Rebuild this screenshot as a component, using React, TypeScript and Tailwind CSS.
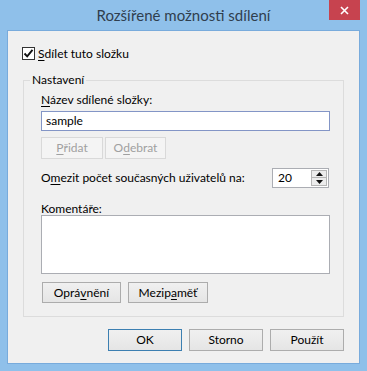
import clsx from "clsx";

type WinButtonProps = {
  children: React.ReactNode;
  className?: string;
  isDefault?: boolean;
  disabled?: boolean;
};

// Classic Win8 push button
function WinButton({ children, className, isDefault, disabled }: WinButtonProps) {
  return (
    <button
      type="button"
      disabled={disabled}
      className={clsx(
        "flex items-center justify-center border leading-none",
        disabled
          ? "border-[#d9d9d9] bg-[#f4f4f4] text-[#a0a0a0]"
          : "bg-linear-to-b from-[#f0f0f0] to-[#e5e5e5] text-black",
        !disabled && (isDefault ? "border-[#3c7fb1]" : "border-[#acacac]"),
        className
      )}>
      {children}
    </button>
  );
}

// Underlined access key letter
function Key({ children }: { children: React.ReactNode }) {
  return <span className="underline underline-offset-2 decoration-1">{children}</span>;
}

function Spinner() {
  return (
    <div className="w-[57px] h-[20px] border border-[#abadb3] bg-white flex">
      <span className="flex-1 pl-[5px] flex items-center">20</span>
      <div className="w-[16px] flex flex-col my-[1px] mr-[1px]">
        <span className="h-[9px] bg-[#ececec] border border-[#b5b5b5] flex items-center justify-center">
          <svg width="7" height="4" viewBox="0 0 7 4">
            <path d="M3.5 0 L7 4 L0 4 Z" fill="#111" />
          </svg>
        </span>
        <span className="h-[9px] bg-[#ececec] border border-t-0 border-[#b5b5b5] flex items-center justify-center">
          <svg width="7" height="4" viewBox="0 0 7 4">
            <path d="M0 0 L7 0 L3.5 4 Z" fill="#111" />
          </svg>
        </span>
      </div>
    </div>
  );
}

export default function App() {
  return (
    <div className="w-[367px] h-[371px] bg-[#8fc0ea] flex flex-col font-['Lato',sans-serif] text-[12px] text-black select-none">
      {/* Title bar */}
      <div className="relative h-[31px] flex items-center justify-center">
        <span className="text-[15px] text-[#2f3e4e]">Rozšířené možnosti sdílení</span>
        <button
          type="button"
          className="absolute top-0 right-[7px] w-[31px] h-[20px] bg-[#c7434f] flex items-center justify-center">
          <svg width="9" height="9" viewBox="0 0 9 9">
            <path d="M1 1 L8 8 M8 1 L1 8" stroke="white" strokeWidth="1.6" />
          </svg>
        </button>
      </div>

      {/* Client area */}
      <div className="mx-[8px] h-[332px] bg-[#f0f0f0] outline-1 outline-[#78abdc] flex flex-col">
        <label className="mt-[16px] ml-[14px] h-[13px] flex items-center gap-[3px]">
          <span className="w-[13px] h-[13px] border border-[#333] bg-white flex items-center justify-center">
            <svg width="11" height="11" viewBox="0 0 11 11">
              <path d="M1.5 5.5 L4.2 8.3 L9.5 1.8" fill="none" stroke="#111" strokeWidth="1.9" />
            </svg>
          </span>
          <span className="leading-[16px]">
            <Key>S</Key>dílet tuto složku
          </span>
        </label>

        <fieldset className="mt-[12px] ml-[15px] w-[321px] h-[245px] border border-[#dcdcdc] pl-[6px] pt-[4px]">
          <legend className="px-[2px] leading-[16px]">Nastavení</legend>
          <div className="pl-[11px] flex flex-col items-start">
            <span className="h-[16px] leading-[16px]">
              <Key>N</Key>ázev sdílené složky:
            </span>
            <div className="mt-[3px] w-[289px] h-[20px] border border-[#8395c6] bg-white flex items-center px-[4px]">
              sample
            </div>

            <div className="mt-[6px] flex gap-[2px]">
              <WinButton disabled className="w-[62px] h-[22px]">
                <Key>P</Key>řidat
              </WinButton>
              <WinButton disabled className="w-[61px] h-[22px]">
                O<Key>d</Key>ebrat
              </WinButton>
            </div>

            <div className="mt-[9px] w-[288px] h-[20px] flex items-center justify-between">
              <span className="leading-[16px]">
                O<Key>m</Key>ezit počet současných uživatelů na:
              </span>
              <Spinner />
            </div>

            <span className="mt-[15px] h-[12px] leading-[12px]">
              <Key>K</Key>omentáře:
            </span>
            <div className="w-[289px] h-[59px] border border-[#abadb3] bg-white" />

            <div className="mt-[8px] ml-[1px] flex gap-[7px]">
              <WinButton className="w-[79px] h-[21px]">
                Oprá<Key>v</Key>nění
              </WinButton>
              <WinButton className="w-[80px] h-[21px]">
                Mezip<Key>a</Key>měť
              </WinButton>
            </div>
          </div>
        </fieldset>

        {/* Dialog buttons */}
        <div className="mt-[12px] pr-[15px] flex justify-end gap-[7px]">
          <WinButton isDefault className="w-[74px] h-[22px]">
            OK
          </WinButton>
          <WinButton className="w-[74px] h-[22px]">Storno</WinButton>
          <WinButton className="w-[74px] h-[22px]">Použít</WinButton>
        </div>
      </div>
    </div>
  );
}
